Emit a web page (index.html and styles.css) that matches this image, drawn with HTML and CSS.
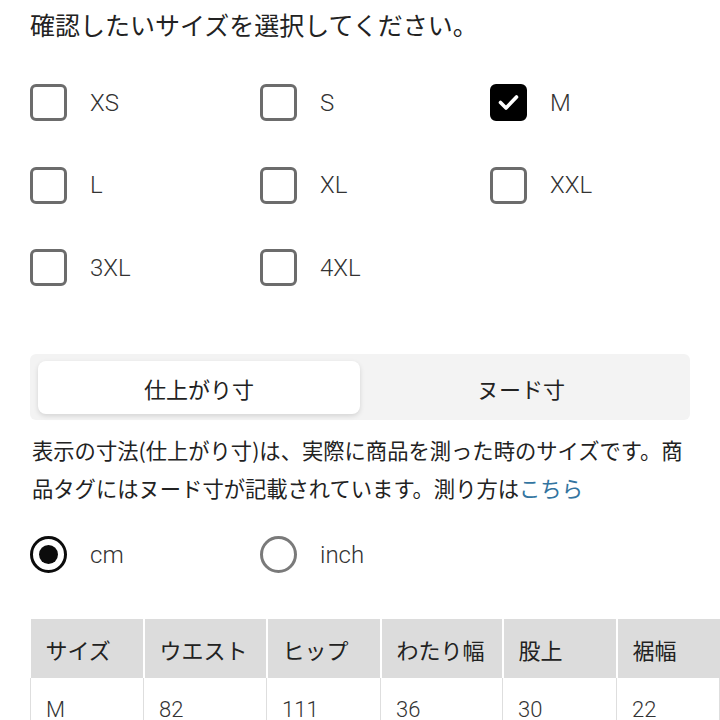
FILE: index.html
```html
<!DOCTYPE html>
<html lang="ja">
<head>
<meta charset="utf-8">
<title>サイズ</title>
<link rel="stylesheet" href="styles.css">
</head>
<body>
<div class="page">
  <h1 class="title">確認したいサイズを選択してください。</h1>

  <div class="sizes">
    <label class="opt"><span class="box"></span><span class="lbl">XS</span></label>
    <label class="opt"><span class="box"></span><span class="lbl">S</span></label>
    <label class="opt"><span class="box checked"><svg viewBox="0 0 37 37" width="37" height="37"><path d="M10.5 18.5 L16 24 L26.5 13" fill="none" stroke="#fff" stroke-width="3.6" stroke-linecap="round" stroke-linejoin="round"/></svg></span><span class="lbl">M</span></label>
    <label class="opt"><span class="box"></span><span class="lbl">L</span></label>
    <label class="opt"><span class="box"></span><span class="lbl">XL</span></label>
    <label class="opt"><span class="box"></span><span class="lbl">XXL</span></label>
    <label class="opt"><span class="box"></span><span class="lbl">3XL</span></label>
    <label class="opt"><span class="box"></span><span class="lbl">4XL</span></label>
  </div>

  <div class="segment">
    <div class="seg-tab active">仕上がり寸</div>
    <div class="seg-tab">ヌード寸</div>
  </div>

  <p class="note">表示の寸法(仕上がり寸)は、実際に商品を測った時のサイズです。商品タグにはヌード寸が記載されています。測り方は<a class="link" href="#">こちら</a></p>

  <div class="units">
    <label class="opt"><span class="radio on"></span><span class="lbl">cm</span></label>
    <label class="opt"><span class="radio"></span><span class="lbl">inch</span></label>
  </div>

  <table class="chart">
    <colgroup>
      <col class="c1"><col class="c2"><col class="c3"><col class="c4"><col class="c5"><col class="c6">
    </colgroup>
    <thead>
      <tr><th>サイズ</th><th>ウエスト</th><th>ヒップ</th><th>わたり幅</th><th>股上</th><th>裾幅</th></tr>
    </thead>
    <tbody>
      <tr><td>M</td><td>82</td><td>111</td><td>36</td><td>30</td><td>22</td></tr>
    </tbody>
  </table>
</div>
</body>
</html>
```

FILE: styles.css
```css
html, body {
  margin: 0;
  padding: 0;
  background: #fff;
}

body {
  font-family: "Noto Sans CJK JP", "Noto Sans", sans-serif;
  color: #222;
  overflow: hidden;
}

.page {
  padding: 7px 30px 0 30px;
  width: 660px;
}

.title {
  margin: 0;
  font-size: 25px;
  line-height: 34px;
  font-weight: 400;
  color: #222;
  white-space: nowrap;
}

.sizes {
  margin-top: 43px;
  display: grid;
  grid-template-columns: 230px 230px 200px;
  row-gap: 45.5px;
}

.opt {
  display: flex;
  align-items: center;
  height: 37px;
}

.box {
  box-sizing: border-box;
  width: 37px;
  height: 37px;
  border: 3px solid #6c6c6c;
  border-radius: 6px;
  flex: none;
  display: flex;
}

.box.checked {
  background: #000;
  border-color: #000;
}

.box.checked svg {
  margin: -3px;
}

.lbl {
  margin-left: 23px;
  font-family: "Roboto", "Noto Sans", sans-serif;
  font-weight: 300;
  font-size: 24px;
  color: #333;
}

.segment {
  margin-top: 68px;
  background: #f3f3f3;
  border-radius: 6px;
  padding: 7px 8px 6px 8px;
  display: flex;
}

.seg-tab {
  flex: 1;
  height: 53px;
  display: flex;
  align-items: center;
  justify-content: center;
  font-size: 22px;
  color: #222;
  border-radius: 8px;
}

.seg-tab.active {
  background: #fff;
  box-shadow: 0 2px 5px rgba(0, 0, 0, 0.13);
}

.note {
  margin: 11px 0 0 2px;
  font-size: 21.3px;
  line-height: 38px;
  color: #222;
}

.link {
  color: #3274a0;
  text-decoration: none;
}

.units {
  margin-top: 29px;
  display: grid;
  grid-template-columns: 230px 230px;
}

.radio {
  box-sizing: border-box;
  width: 37px;
  height: 37px;
  border: 3px solid #7a7a7a;
  border-radius: 50%;
  flex: none;
  display: flex;
  align-items: center;
  justify-content: center;
}

.radio.on {
  border: 3.5px solid #0c0c0c;
}

.radio.on::after {
  content: "";
  width: 19px;
  height: 19px;
  border-radius: 50%;
  background: #0c0c0c;
}

.chart {
  margin-top: 46px;
  width: 689px;
  border-collapse: collapse;
  table-layout: fixed;
  font-size: 22px;
}

.c1 { width: 113px; }
.c2 { width: 123px; }
.c3 { width: 114px; }
.c4 { width: 122px; }
.c5 { width: 114px; }
.c6 { width: 103px; }

.chart th {
  background: #dcdcdc;
  height: 59px;
  padding: 0 0 0 15px;
  text-align: left;
  font-weight: 400;
  color: #222;
  border-left: 2px solid #fff;
  white-space: nowrap;
}

.chart th:first-child {
  border-left: 0;
}

.chart td {
  height: 62px;
  padding: 0 0 0 15px;
  text-align: left;
  font-family: "Roboto", "Noto Sans", sans-serif;
  font-weight: 300;
  color: #333;
  border: 1px solid #dedede;
  border-top: 0;
}
```
